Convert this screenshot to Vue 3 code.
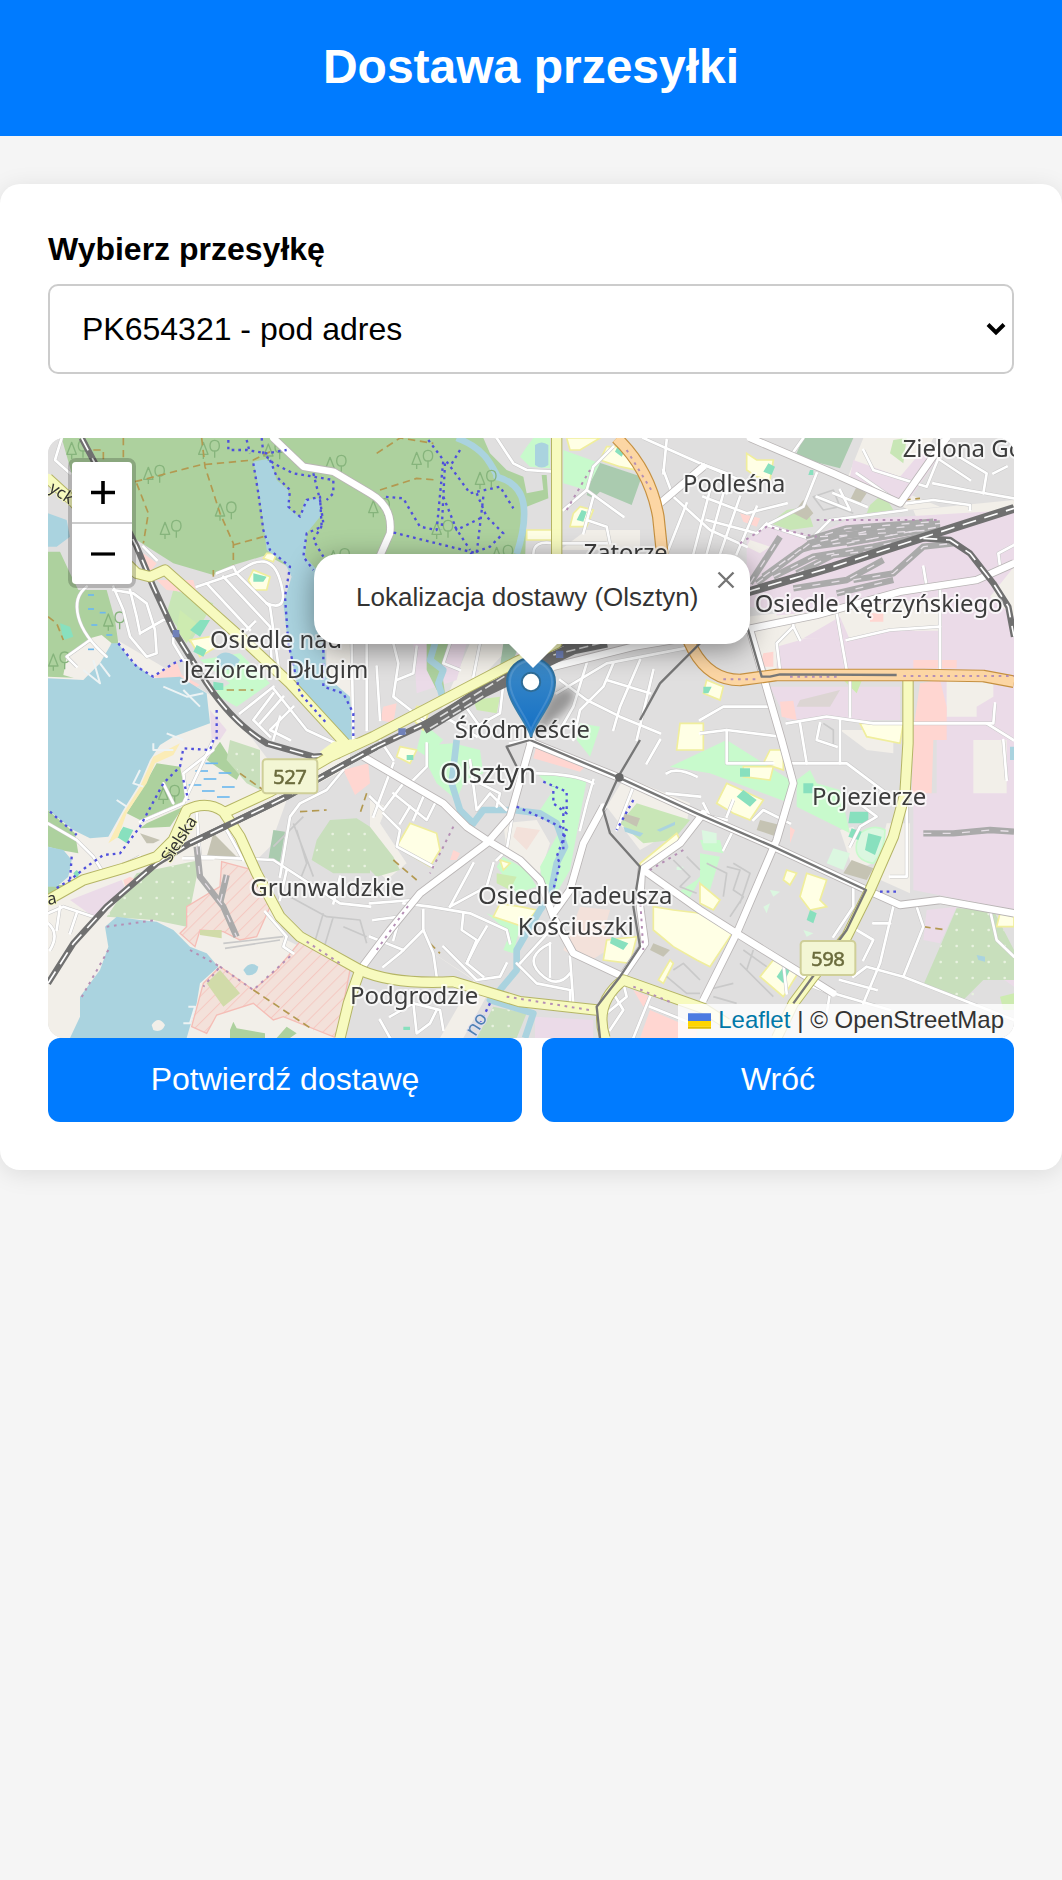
<script setup>
import { ref } from 'vue'

const parcel = ref('PK654321')

// Map geometry: three units per screen pixel.
const areas = [
  // open land
  { c: '#f2efe9', d: 'M24 690L180 600L420 740L520 800L640 930L700 1010L930 940L930 1010L740 1110L690 1250L640 1300L740 1530L920 1620L900 1824H24Z' },
  { c: '#f2efe9', d: 'M860 640H935V830L860 760ZM990 1110L1040 1130L1020 1180L1100 1300L1040 1350L990 1300Z' },
  { c: '#f2efe9', d: 'M1390 1180L1490 1170L1530 1240L1500 1330L1400 1260ZM1150 1550L1300 1650L1200 1824H1270L1350 1680Z' },
  { c: '#f2efe9', d: 'M2470 24H2680L2600 190L2700 230L2600 240L2540 180L2420 150ZM2120 560L2400 530L2700 540V720H2180ZM2620 240L2922 210V250L2640 290ZM2800 500L2922 400V540L2870 500Z' },
  { c: '#f2efe9', d: 'M2700 750H2860V860H2700ZM2800 900H2900V1090H2800ZM2400 900H2560V970L2480 960ZM2540 1180H2610V1390L2500 1340ZM2400 1200L2440 1190L2500 1300L2440 1320Z' },
  { c: '#f2efe9', d: 'M1755 1040L1950 1120L1940 1180L1800 1260L1700 1130ZM1560 360H1800V300L1640 300ZM1420 640H1290L1200 850L1270 800Z' },
  // industrial
  { c: '#ebdbe8', d: 'M2120 330L2180 280L2320 320L2420 270L2922 240V540H2700V720H2700V590L2400 630L2300 625L2210 630V540L2120 530Z' },
  { c: '#f2efe9', d: 'M2120 565L2330 545L2700 500V595L2560 600L2430 630L2400 560L2290 625L2230 640L2200 700L2150 600Z' },
  { c: '#ebdbe8', d: 'M2700 490H2922V1440L2620 1380L2620 1090H2690V860L2700 720ZM2210 650L2300 625H2430L2560 602H2700V720H2210ZM2190 770H2580V870L2240 870Z' },
  { c: '#ebdbe8', d: 'M2440 90L2580 140L2640 70L2690 90L2600 220L2430 140ZM1120 640H1280L1250 750L1130 790ZM1440 650H1560L1500 780L1400 750Z' },
  { c: '#ebdbe8', d: 'M90 1410L245 1350L260 1385L160 1460ZM510 840L560 900L540 930H515ZM1485 1760L1660 1770V1824H1485ZM2660 1440L2750 1430L2700 1540L2650 1530ZM2900 1600H2922V1670L2880 1640Z' },
  { c: '#f2efe9', d: 'M2720 750H2860V800L2810 830V860H2720ZM2800 930H2900V1090H2800ZM2130 330L2190 350L2160 370L2120 350ZM2850 500L2922 410V560Z' },
  // forest
  { c: '#add19e', d: 'M65 24H1330L1350 70L1400 120L1450 140L1460 190L1510 180L1505 135H1520L1525 205L1460 230L1455 400H1400L1000 560L800 480L745 410L680 375L580 405L520 435L400 400L290 330L95 130Z' },
  { c: '#add19e', d: 'M24 365H60L90 430L115 480H200L225 570L235 640L190 650L140 745L24 740Z' },
  { c: '#f2efe9', d: 'M80 680L150 625L185 615L215 640L180 700L130 752L70 735Z' },
  { c: '#add19e', d: 'M350 1000L420 1010L440 1110L300 1170L260 1150L310 1070ZM500 990L540 935L600 1030L590 1050ZM24 1140L105 1210L115 1270L60 1260L24 1250ZM320 1180L430 1130L390 1190L300 1195ZM24 1365H90L60 1395H24Z' },
  { c: '#add19e', d: 'M1160 640H1225L1205 720L1215 790L1190 780L1160 720ZM570 1800L580 1775L590 1795L675 1810V1824H570ZM710 1824L740 1790L770 1810L750 1824Z' },
  { c: '#aacbaf', d: 'M1670 95L1805 140L1775 225L1680 185L1660 205L1640 195ZM2290 24H2440L2400 115L2265 80ZM1390 640H1440L1420 690L1380 710ZM700 1200L735 1205L720 1295L685 1290Z' },
  // orchard, scrub and grass
  { c: '#c8dfbc', d: 'M290 1330L480 1290L440 1490L340 1470L200 1460ZM570 930L660 960V1080L620 1060L560 990ZM870 1170L950 1165L990 1190V1330H880L815 1290L830 1230ZM990 1190L1060 1280L1080 1320L1010 1340L990 1320Z' },
  { c: '#c8dfbc', d: 'M2750 1435L2860 1440L2922 1560V1650L2830 1650L2770 1710L2650 1665ZM1360 1730L1460 1750L1430 1824H1310Z' },
  { c: '#c8e6b6', d: 'M2240 240L2300 230L2320 290L2250 300L2190 280ZM2490 225L2530 190L2560 240L2480 250ZM2560 30L2600 24L2590 100L2550 70ZM400 480L520 520L450 640L380 550ZM1740 1180L1790 1120L1950 1170L1900 1230L1810 1240Z' },
  { c: '#c8facc', d: 'M480 690L600 670L690 760L590 830L520 790L570 760ZM1460 50L1480 24H1530V115L1470 110L1440 80ZM1570 60L1680 100L1640 180L1570 160Z' },
  { c: '#c8facc', d: 'M1170 945L1240 940L1320 960L1330 1030L1270 1060L1250 1110L1190 1060L1160 1000ZM1490 1030L1640 1050L1590 1320L1520 1440L1500 1310L1560 1200L1500 1140L1540 1080Z' },
  { c: '#c8facc', d: 'M1390 1280L1460 1320L1490 1370L1430 1390L1370 1310ZM1340 1450L1440 1490L1420 1570L1390 1560L1410 1510ZM1890 1010L2060 930L2250 1050V1120L2010 1030ZM2270 1050L2310 1020L2330 1060L2400 1080L2430 1210L2270 1130ZM1980 1230L2040 1230L2050 1270L1990 1260ZM1980 1270L2040 1280L2010 1380L1980 1360Z' },
  { c: '#c8facc', d: 'M1620 880L1680 890L1650 980L1610 930ZM1150 880L1210 930L1160 980L1130 960ZM1990 1330L1940 1420L1910 1390L1970 1350Z' },
  { c: '#cdebb0', d: 'M1300 810L1380 800L1370 850L1310 840ZM420 540L470 580L440 640L410 600ZM500 1660L540 1620L600 1690L550 1730ZM1370 1330L1430 1340L1410 1380L1370 1360ZM2410 750L2470 740L2450 790ZM2880 1700L2922 1690V1740L2890 1740Z' },
  // retail and brownfield
  { c: '#ffd6d1', d: 'M1490 945L1640 1005L1620 1025L1480 985ZM2640 760L2700 750L2720 830V930H2620V900ZM2620 930H2680L2675 1090H2615ZM2220 815L2260 812L2270 870L2225 860ZM2170 670L2200 665L2200 710H2160ZM2490 550H2530V575H2490Z' },
  { c: '#ffd6d1', d: 'M340 740L410 695L425 735L480 765L460 775L380 750ZM310 370L350 400L330 425L310 410ZM350 450L460 450L470 490L380 480ZM910 1020L985 1000L990 1060L945 1095ZM1030 830L1070 820L1060 880L1020 870Z' },
  { c: '#ffd6d1', d: 'M1780 1680L1830 1700L1810 1730ZM1830 1740L1970 1800V1824H1800ZM2100 250L2160 265L2150 290L2110 275ZM2620 690H2750V715H2620ZM2250 1190L2265 1200L2250 1240ZM250 1350L270 1340L290 1350L260 1385ZM1240 1260L1260 1270L1250 1290L1230 1290Z' },
  { c: '#f3e1da', d: 'M1430 1190L1500 1200L1460 1260L1420 1220ZM1620 1430L1710 1440L1690 1510L1750 1530L1640 1600L1570 1560Z' },
  { c: '#c5c3b3', d: 'M2290 210L2320 250L2300 270L2260 250ZM520 1210L590 1280L500 1280ZM300 1210L360 1230L340 1240L320 1240ZM1750 1150L1800 1165L1790 1190L1750 1170ZM2160 1170L2220 1185L2210 1220L2150 1200ZM2435 1290L2500 1315L2480 1350L2410 1330ZM2450 170L2480 190L2460 220L2430 210ZM1840 1540L1890 1560L1870 1580L1830 1560Z' },
  { c: '#dcd5d3', d: 'M2280 810L2400 780L2370 830H2270Z' },
  // schools
  { c: '#ffffe5', s: '#f0ee9c', d: 'M1680 24H1580L1590 60L1620 60ZM1700 50L1760 50L1790 120L1740 110L1680 90ZM1620 230L1660 240L1640 290L1590 290L1600 250ZM640 420L690 440L680 480L640 480L625 450ZM680 370L710 370L700 395L670 385Z' },
  { c: '#ffffe5', s: '#f0ee9c', d: 'M1110 1180L1190 1210L1200 1260L1170 1310L1070 1250ZM1380 1420L1440 1430L1490 1440L1450 1490L1360 1460ZM1460 300H1540V330H1460ZM450 630L510 620L530 650L480 680Z' },
  { c: '#ffffe5', s: '#f0ee9c', d: 'M1840 1430L1900 1440L2000 1452L2080 1505L2010 1610L1970 1590L1900 1550L1840 1500Z' },
  { c: '#ffffe5', s: '#f0ee9c', d: 'M2120 70L2150 90L2200 90L2190 150L2150 140L2120 120ZM2000 750L2050 770L2040 810L1990 790ZM2060 1060L2170 1110L2130 1170L2080 1150L2030 1120ZM2190 960L2230 960V1020L2170 1000ZM2110 1010L2200 1010L2190 1050L2110 1040ZM2460 880L2590 880L2580 940L2480 920Z' },
  { c: '#ffffe5', s: '#f0ee9c', d: 'M2300 1330L2360 1350L2340 1410L2360 1430L2310 1440L2280 1400ZM2240 1320L2270 1330L2250 1365L2230 1350ZM2200 1590L2280 1620L2230 1700L2160 1640ZM1980 1360L2040 1410L2020 1440L1980 1420ZM2880 1450L2922 1460V1490H2870ZM1700 1530L1790 1520L1770 1600L1690 1590ZM1800 1300L1910 1210L1920 1230L1800 1330ZM1080 950L1130 960L1110 1000L1070 980ZM1130 830L1170 830L1150 900L1120 870ZM1920 880H1990V960H1910ZM1890 1590L1900 1600L1870 1660L1855 1650ZM1380 1290L1410 1300L1390 1320Z' },
  // pitches
  { c: '#88e0be', d: 'M480 570L510 570L480 620L450 600ZM470 645L500 660L490 680L460 665ZM520 755L550 760V780H520ZM640 430L680 440L670 455H640ZM60 580L90 590L100 620L70 630ZM1735 45L1755 60L1745 80L1725 65ZM1625 240L1640 245L1630 275L1610 270ZM2185 100L2205 110L2195 135L2170 125ZM1990 770L2015 770L2005 790H1990Z' },
  { c: '#dbf7e0', s: '#c8facc', d: 'M2460 1210Q2500 1180 2535 1200Q2535 1260 2500 1300Q2440 1290 2450 1240Z' },
  { c: '#88e0be', d: 'M2430 1145H2485V1180H2425ZM2435 1195L2465 1205L2455 1230L2425 1220ZM2485 1210L2525 1220L2505 1275L2475 1260ZM1715 1520L1765 1540L1750 1560L1710 1540ZM2110 1080L2150 1110L2130 1130L2090 1100ZM2230 1610L2250 1620L2230 1660L2210 1640ZM2310 1440L2330 1450L2320 1480L2300 1470ZM250 1190L280 1200L260 1240L230 1220ZM110 1320L120 1330L110 1345L100 1330ZM2290 1060H2320V1090H2290ZM2100 1015H2130V1040H2100ZM2310 120H2320V135H2305ZM1100 975H1120V990H1100ZM1090 1790H1110V1800H1090Z' },
  { c: '#dbf7e0', d: 'M2380 1255L2430 1270L2410 1320L2360 1300ZM1985 1200L2030 1210V1240H1990ZM2190 1380L2220 1385L2200 1400ZM2170 1430L2190 1420L2180 1450ZM2290 1500L2320 1510L2300 1520ZM1910 1310H1930V1320H1910Z' },
  // water
  { c: '#aad3df', d: 'M640 95L690 85L710 150L745 180L750 240L780 260L795 210L840 205L840 260L800 310L795 380L840 430L860 740L930 800L940 930L880 920L780 800L745 650L730 520L755 440L735 400L680 360L665 240L650 140Z' },
  { c: '#aad3df', d: 'M24 745L130 750L180 700L215 640L235 640L270 690L340 745L420 740L500 790L510 880L400 920L360 945L330 990L300 1060L250 1140L205 1220L150 1225L100 1200L24 1140ZM24 250L80 270L90 320L50 350H24ZM24 1250L70 1260L95 1290L85 1340L50 1370H24Z' },
  { c: '#aad3df', d: 'M195 1490L230 1460L300 1470L350 1475L400 1500L450 1550L500 1570L535 1610L480 1660L470 1720L440 1824H90L120 1760V1700L180 1620L205 1550ZM610 1620Q630 1590 655 1610Q650 1640 620 1635ZM530 680Q560 650 600 690Q580 730 540 715Z' },
  { c: '#aad3df', d: 'M1485 45Q1505 30 1525 45V105Q1505 120 1485 105ZM1750 1190L1810 1210L1800 1220L1755 1205ZM1850 1200L1905 1175V1185L1860 1205ZM2810 1575L2835 1580V1595L2815 1590ZM2910 950H2922V990H2910Z' },
  { c: '#f2efe9', d: 'M335 1785Q355 1755 375 1785Q365 1810 340 1800Z' },
  // beach along the big lake
  { c: '#fbecb6', d: 'M340 980L420 940L400 975L345 1000L320 1060L260 1150L235 1220L205 1240L250 1150L300 1070Z' },
]

// Brownfield plots drawn with a hatch
const hatched = [
  'M545 1295L640 1320L690 1430L650 1520L600 1530L550 1505L480 1500L465 1550L420 1510L440 1490V1430L540 1370Z',
  'M780 1535L930 1620L890 1824L730 1760L700 1770L640 1720L530 1755L500 1810L455 1790L490 1660L540 1610L640 1680L710 1620Z',
]

const streams = [
  'M1250 24Q1320 50 1350 100T1370 140Q1440 160 1450 220T1430 372',
  'M1185 640L1170 690L1210 720L1195 760L1210 810',
  'M1250 930L1235 1060L1260 1140L1300 1180L1330 1140L1420 1140L1500 1150L1550 1180L1575 1250L1550 1300L1530 1400L1500 1440L1430 1560V1620L1380 1680L1350 1710L1480 1750L1455 1824',
]

const minor = [
  // north-west
  'M65 24L45 90L90 130', 'M140 470Q100 500 115 560T200 680', 'M150 630L80 680L110 710', 'M220 470L250 540L270 620L320 680L350 670L345 600L320 520L280 490L220 480', 'M270 480L290 560L300 610', 'M300 610L370 570Q400 560 400 640L430 690L470 700', 'M470 470L590 430L580 410L530 430', 'M590 430Q690 350 720 450T680 520', 'M590 430L690 530L720 740', 'M550 440L690 590L695 700', 'M500 460L630 600', 'M620 600L645 575',
  'M350 390L310 350', 'M700 770L600 850', 'M700 775L800 900L930 960', 'M700 790L640 870L690 920', 'M730 800L660 880', 'M760 830L690 900L750 930', 'M935 640L940 930', 'M980 640V900', 'M720 860L700 930',
  // old town and centre
  'M1060 640L1075 700L1060 800L1150 870', 'M1130 650L1120 730L1070 750', 'M1010 710L1020 870', 'M1230 640L1210 700L1260 720', 'M1320 640L1300 740', 'M1150 880L1230 870L1310 920', 'M1270 820L1320 890', 'M1390 760L1380 850L1290 900', 'M1410 940L1460 930', 'M1560 750L1640 810L1740 860L1860 910', 'M1640 700L1600 830L1560 900', 'M1720 700L1690 770L1620 840L1600 930', 'M1800 690L1740 830L1720 900', 'M1700 750L1830 790', 'M1550 790L1700 700L1960 650', 'M1840 720L1790 930',
  'M990 1100L1030 1140L1090 1060', 'M1000 1160L1060 1000', 'M1030 1150L1080 1200L1070 1250L1180 1310', 'M1060 1090L1160 1170L1190 1110', 'M1080 1180L1110 1130', 'M1120 1170L1150 1100', 'M1160 940V1010L1120 1050', 'M1020 930L1060 990', 'M1290 990L1310 1140L1350 1090L1400 1140', 'M1320 1060L1380 1090L1370 1130', 'M1490 1030Q1600 1030 1660 1060', 'M1420 1140L1400 1260L1370 1290', 'M1360 1300L1340 1370L1230 1430', 'M1300 1300L1230 1430', 'M1090 1420L1170 1430L1290 1450L1400 1500L1410 1540', 'M1270 1450L1265 1500L1310 1530L1280 1600', 'M1150 1440L1150 1500L1180 1570L1190 1640', 'M1150 1500L1080 1570L1030 1610', 'M990 1520L1090 1560', 'M1340 1490L1310 1540L1280 1600L1330 1640', 'M1210 1550L1280 1620L1310 1650L1380 1640L1400 1600', 'M990 1420L1120 1410', 'M1000 1470L1080 1460L1060 1530',
  'M1530 1540V1640', 'M1530 1540Q1450 1580 1500 1630T1590 1630', 'M1430 1600L1490 1660L1590 1680L1590 1720', 'M1590 1580L1600 1720', 'M1550 1480L1440 1600', 'M1620 1200L1640 1120L1660 1050', 'M1780 1070L1730 1200', 'M1820 1000L1860 930', 'M1880 1030Q1910 1010 1970 1040', 'M1880 1090L1980 1100', 'M1700 1750L1760 1700L1750 1660', 'M1830 1700L1780 1824', 'M1830 1730L1980 1790', 'M1720 1690L1750 1740L1710 1800',
  // north
  'M1370 24L1420 100L1460 120L1540 125', 'M1570 240L1640 180L1660 110L1720 50', 'M1640 180L1750 260', 'M1660 200L1630 310', 'M1640 270L1700 290L1710 340', 'M1480 372Q1480 330 1540 340H1700', 'M1870 120L1900 200L2010 300L2120 350', 'M1880 30L1870 130', 'M1810 24L1980 100L2100 150', 'M1990 200L2120 250L2240 220', 'M2000 270L2150 310L2180 280', 'M2010 180L1960 372', 'M2050 190L2000 372', 'M2100 200L2040 372', 'M2150 230L2090 372', 'M1940 220L1880 372', 'M2330 130L2290 230L2180 285L2320 330', 'M2250 80L2290 24', 'M2450 130L2580 220', 'M2470 60L2500 120L2660 170L2720 24', 'M2680 160L2780 180L2922 205', 'M2700 90L2790 150', 'M2740 70L2840 130L2830 190', 'M2860 130L2900 110', 'M1980 100L2060 130V190', 'M2320 320L2370 270L2600 240', 'M2600 220L2680 210L2790 225V240', 'M2330 200L2430 240L2400 180', 'M2380 190L2480 230',
  // east
  'M2220 720L2210 640L2260 590L2280 630', 'M2260 590L2260 560', 'M2390 550L2420 720', 'M2420 630L2550 600L2700 590', 'M2700 480V720', 'M2650 410L2660 470', 'M2880 410L2875 370L2922 345', 'M2430 750V860', 'M2240 880L2360 860L2500 880H2860L2865 820', 'M2840 880L2920 930', 'M2280 880L2300 1000', 'M2400 870V1000', 'M2340 880L2330 930L2390 950', 'M2890 930L2900 1050', 'M1980 870L2050 830H2190', 'M1980 910L2060 900L2220 920', 'M2060 900V1000L2200 1000', 'M2250 1000H2420L2540 1090', 'M2430 1250L2460 1190L2510 1160L2470 1130', 'M2600 1090V1340H2550', 'M2140 1170L2170 1140L2250 1180', 'M2060 1160L2080 1110', 'M2050 1260L2080 1200', 'M2440 1370L2440 1430L2380 1520', 'M2560 1430L2520 1600L2470 1720', 'M2630 1430L2650 1490L2590 1640L2480 1610L2440 1640', 'M2590 1640L2922 1770', 'M2450 1500L2500 1530L2470 1590', 'M2500 1480H2550', 'M2850 1440L2870 1530L2922 1580', 'M2320 1670L2370 1690L2360 1750', 'M2400 1650L2510 1680', 'M2380 1690L2550 1740', 'M2240 1690L2230 1600', 'M1990 1120L2010 1160L2060 1170',
  // west
  'M24 1180L110 1230L160 1280L185 1320', 'M300 1175L430 1120L520 930', 'M370 1060L400 1120', 'M440 1110L430 1030L520 960', 'M470 1150L480 1280L700 1290L900 1420L990 1430', 'M430 1285H520', 'M560 1200L610 1290', 'M740 1320L720 1410', 'M910 1020L860 1080L780 1120L750 1160L720 1340', 'M675 1445L740 1520L730 1550L760 1570', 'M24 1450L70 1430L160 1460', 'M110 1450L90 1510', 'M24 1480Q60 1510 30 1560', 'M60 1430L50 1500', 'M260 1300L300 1280', 'M1020 1770L1050 1824', 'M1050 1760L1120 1720L1200 1740L1210 1800', 'M1120 1720L1130 1810L1170 1780L1190 1740', 'M970 1600L990 1570', 'M900 1340L880 1420',
]

const service = [
  'M790 1160L700 1250M770 1200L800 1300L780 1350M760 1180L820 1340M750 1400L860 1460L960 1470L980 1540M850 1450L820 1550M880 1460L850 1560M910 1490L980 1520',
  'M2060 1310L2100 1320L2080 1380L2110 1400L2070 1460M2080 1300L2130 1330L2100 1420M2000 1300L2060 1330L2050 1400',
  'M2320 200L2380 180L2400 230L2350 240ZM2340 210L2440 250',
  'M2000 1680L2080 1660M2020 1700L2090 1720M2110 1560L2180 1610M2100 1600L2200 1700M2140 1560L2120 1620',
  'M1880 1640L1940 1690H1980M1900 1620L1930 1600L1980 1650M1900 1290L1950 1340L1920 1370L1970 1390M1940 1280L1980 1320',
  'M550 1540L730 1520M555 1555L720 1530M2350 880L2380 900V950',
]

const main = [
  'M700 24L790 110L880 125L990 190Q1060 230 1050 310L1010 400',
  'M970 980L1210 1120L1280 1190L1340 1230L1440 1290L1500 1350L1540 1460L1600 1570L1750 1640',
  'M1475 930L1410 1160L1340 1240L1140 1390L1050 1500L960 1620',
  'M1690 1130L1630 1240L1590 1380L1540 1450',
  'M1990 1150L1920 1240L1805 1320L1800 1430L1815 1540L1750 1635',
  'M1810 1320L1980 1440L2090 1510L2300 1640L2380 1690',
  'M2130 600L2170 740L2225 930L2260 1060L2210 1230L2090 1510L1990 1710',
  'M1470 935L1730 1040L1970 1150L2200 1250L2480 1380L2580 1425L2700 1410L2922 1450',
  'M2130 24L2380 130L2580 220L2700 50L2720 24',
  'M2110 600L2330 555L2580 485L2810 450L2922 400',
  'M1540 710L1780 650L1960 620',
  'M1860 220L1990 110',
]

const secondary = [
  'M24 145L100 215L250 390L290 430L330 440L375 420L600 620L750 760L920 945',
  'M560 1145L690 1085L870 980L1000 920L1430 695L1550 640V24',
  'M24 1410L130 1350L250 1315L350 1280L400 1230L440 1140Q500 1110 550 1145L600 1220L650 1330L720 1460L780 1520L960 1620Q1060 1665 1240 1655L1440 1715L1670 1740',
  'M960 1620L925 1720L900 1824',
  'M1695 1824Q1660 1720 1750 1650L1990 1735L2060 1780',
  'M2604 750V940L2595 1090L2560 1220L2490 1380L2420 1520L2320 1640L2260 1720L2210 1824',
]

const primary = ['M1730 24Q1830 120 1855 260L1880 500L1960 660Q2010 750 2100 750L2210 735H2650L2830 738L2922 755']

const tram = [
  'M1800 870L1860 760L1990 630', 'M2110 550L2165 740L2190 740L2220 733L2570 735', 'M1470 930L1730 1040L1970 1150L2200 1250L2478 1380L2420 1500L2260 1720',
  'M1800 930L1735 1040L1690 1140L1710 1210L1800 1310L1780 1430L1800 1550L1740 1640L1670 1730L1680 1824', 'M1470 930L1400 950L1430 1010',
]

const yard = [
  'M2130 460L2220 320', 'M2150 460L2310 340L2500 300L2700 280', 'M2200 440L2320 380L2500 350L2640 320', 'M2300 330L2420 295L2680 275', 'M2320 350L2500 325L2700 290', 'M2340 320L2480 312L2680 300', 'M2260 475L2420 450L2530 390', 'M2440 450L2560 430L2650 350L2740 340', 'M2420 340L2640 300', 'M2390 490L2560 450', 'M2270 430L2380 375L2470 365', 'M2170 440L2280 360L2420 320', 'M2650 1210H2740L2850 1200L2922 1205', 'M470 1250L480 1340L550 1430L590 1520', 'M560 1335L540 1420',
]

const rail = [
  'M24 1660L100 1540L200 1430L350 1300L450 1240L740 1100L900 1010L1010 950L1200 860L1300 790L1420 710L1600 640L1800 590L2140 480L2380 410L2640 325L2922 235',
  'M125 24L165 100L290 350L340 470L400 600L500 760Q580 880 680 940L820 980L900 975',
  'M2650 325L2730 330L2790 370L2860 460L2905 530L2922 620',
]

const footpaths = [
  'M640 100L655 190L670 300L690 360L750 410L735 500L745 640', 'M690 90L710 140L750 180L745 230L780 260L800 210L840 200L845 290L800 310L790 380L820 420', 'M565 30V60H620L680 70L740 60', 'M620 30L630 70', 'M665 24L670 70L700 100L760 130L880 150V190L860 210', 'M820 130L840 210', 'M840 210L850 280L820 330L850 380',
  'M1165 30L1210 90L1190 300L1140 290L1110 240L1090 205L1030 200', 'M1220 95L1290 190L1380 170L1420 235', 'M1215 100L1205 300', 'M1310 190L1340 260L1390 310L1350 350L1290 372', 'M1330 200L1310 370L1050 305', 'M1260 60L1230 110', 'M1210 200L1250 300L1330 260', 'M1245 290L1290 360', 'M235 640L290 710L340 740L400 700L430 690', 'M850 640V770L910 790L940 850V930', 'M745 640L780 790L860 880',
  'M520 930L510 960L430 955L420 1010L370 1060L300 1190L240 1270L190 1275L140 1310L90 1350L40 1380', 'M30 1145L110 1215', 'M95 1280L90 1350', 'M430 1050L445 1110', 'M1510 1055L1580 1085V1150L1540 1120V1070', 'M1430 1130L1520 1170L1580 1200L1550 1280L1560 1300L1540 1380', 'M1570 1130V1260', 'M1780 1110L1730 1200', 'M1350 1720L1320 1780', 'M2520 1385H2580', 'M530 840V930',
]

const tracks = [
  'M285 155L480 105L640 90L700 60', 'M485 24L495 110L540 250L580 340V410', 'M250 24V150', 'M580 345L670 320', 'M290 160L325 250L310 340', 'M520 440V420', 'M1010 70L1080 24L1180 40', 'M1020 180L1130 145L1190 150', 'M160 60H190V120', 'M24 560L50 580L70 630', 'M600 1030L670 1080', 'M780 1145L860 1140', 'M980 1090L960 1150', 'M640 1680L820 1800', 'M560 780H640', 'M1060 1290L1130 1350', 'M2590 210L2640 205', 'M2650 1490L2720 1500', 'M1170 1540L1200 1570',
]

const trees = [[95, 55], [490, 55], [325, 130], [540, 240], [375, 295], [685, 60], [870, 100], [205, 570], [40, 690], [1130, 85], [1320, 145], [1190, 295], [1370, 370], [1000, 230], [880, 380], [370, 1090]]

const wetland = [
  [150, 495], [150, 537], [185, 548], [160, 585], [205, 615], [150, 658], [480, 1023], [550, 1029], [505, 1047], [460, 1065], [560, 1071], [500, 1083], [545, 1101], [510, 1000],
]

const labels = [
  { t: 'Osiedle nad', x: 510, y: 653, w: 396 },
  { t: 'Jeziorem Długim', x: 431, y: 743, w: 554 },
  { t: 'Zatorze', x: 1631, y: 394, w: 252 },
  { t: 'Podleśna', x: 1929, y: 186, w: 307 },
  { t: 'Zielona Góra', x: 2588, y: 82, w: 430 },
  { t: 'Osiedle Kętrzyńskiego', x: 2144, y: 545, w: 744 },
  { t: 'Śródmieście', x: 1244, y: 923, w: 406 },
  { t: 'Olsztyn', x: 1200, y: 1060, w: 288, s: 80 },
  { t: 'Grunwaldzkie', x: 631, y: 1397, w: 463 },
  { t: 'Osiedle Tadeusza', x: 1314, y: 1421, w: 583 },
  { t: 'Kościuszki', x: 1433, y: 1516, w: 348 },
  { t: 'Podgrodzie', x: 930, y: 1721, w: 385 },
  { t: 'Pojezierze', x: 2316, y: 1125, w: 343 },
]

const shields = [
  { t: '527', x: 668, y: 988 },
  { t: '598', x: 2282, y: 1533 },
]
</script>

<template>
  <div class="page">
    <header class="header"><h1>Dostawa przesyłki</h1></header>

    <main class="card">
      <label class="label" for="parcel">Wybierz przesyłkę</label>
      <div class="select-wrap">
        <select id="parcel" v-model="parcel" class="select">
          <option value="PK654321">PK654321 - pod adres</option>
        </select>
        <svg class="chevron" viewBox="0 0 20 14"><path d="M2 2.5L10 10.5L18 2.5" fill="none" stroke="#000" stroke-width="4" /></svg>
      </div>

      <section class="map">
        <svg class="tiles" viewBox="24 24 2898 1800" preserveAspectRatio="none">
          <defs>
            <pattern id="hatch" width="28" height="28" patternUnits="userSpaceOnUse" patternTransform="rotate(45)">
              <rect width="28" height="28" fill="#f3e1da" />
              <rect width="3" height="28" fill="#f5c9c2" />
            </pattern>
            <pattern id="dots" width="48" height="48" patternUnits="userSpaceOnUse">
              <circle cx="14" cy="12" r="4" fill="#e8f2df" />
            </pattern>
          </defs>
          <rect x="24" y="24" width="2898" height="1800" fill="#e0dfdf" />
          <path v-for="(a, i) in areas" :key="'a' + i" :d="a.d" :fill="a.c" :stroke="a.s || 'none'" stroke-width="5" />
          <path v-for="(h, i) in hatched" :key="'h' + i" :d="h" fill="url(#hatch)" stroke="#f5bdb6" stroke-width="4" />
          <path d="M500 1660L540 1620L600 1690L550 1730ZM480 1500H545V1525L480 1515Z" fill="#d1dba9" />
          <path d="M290 1330L480 1290L440 1490L200 1460ZM870 1170L990 1190V1330H880L815 1290ZM2750 1435L2860 1440L2922 1560V1650L2770 1710L2650 1665ZM570 930L660 960V1080L560 990ZM1360 1730L1460 1750L1430 1824H1310Z" fill="url(#dots)" />
          <g class="stream"><path v-for="(d, i) in streams" :key="i" :d="d" /></g>
          <g class="shore">
            <path d="M160 690L180 760L130 720M180 700L210 740M370 770L440 800L490 790M430 780L480 830M380 910L430 930M300 1020L280 1060L310 1070M340 940V960H400M230 1110L260 1130M445 1730H465L450 1780H430" />
          </g>

          <g class="tree">
            <path v-for="(t, i) in trees" :key="i" :transform="`translate(${t[0]} ${t[1]})`" d="M0 -18L-14 18H14ZM0 18V32M34 -24Q48 -24 48 -8T34 8Q20 8 20 -8T34 -24M34 8V28" />
          </g>
          <g class="wet"><path v-for="(w, i) in wetland" :key="i" :d="i < 6 ? `M${w[0] - 6} ${w[1]}h18` : `M${w[0] - 14} ${w[1]}h38`" /></g>
          <g class="track"><path v-for="(d, i) in tracks" :key="i" :d="d" /></g>

          <g class="service"><path v-for="(d, i) in service" :key="i" :d="d" /></g>
          <g class="minor-edge"><path v-for="(d, i) in minor" :key="i" :d="d" /></g>
          <g class="minor"><path v-for="(d, i) in minor" :key="i" :d="d" /></g>
          <g class="yard"><path v-for="(d, i) in yard" :key="i" :d="d" /></g>
          <g class="yard-gap"><path v-for="(d, i) in yard" :key="i" :d="d" /></g>
          <g class="main-edge"><path v-for="(d, i) in main" :key="i" :d="d" /></g>
          <g class="main"><path v-for="(d, i) in main" :key="i" :d="d" /></g>
          <g class="rail"><path v-for="(d, i) in rail" :key="i" :d="d" /></g>
          <path d="M2120 487L2380 410L2640 325L2922 235" fill="none" stroke="#707070" stroke-width="26" />
          <g class="rail-gap"><path v-for="(d, i) in rail" :key="i" :d="d" /></g>
          <path d="M1150 895L1330 785L1600 655L1700 635" fill="none" stroke="#707070" stroke-width="36" />
          <path d="M1170 895L1330 798M1200 860L1400 735M1540 675L1700 635" fill="none" stroke="#ddd" stroke-width="5" stroke-dasharray="28 12" />
          <g class="sec-edge"><path v-for="(d, i) in secondary" :key="i" :d="d" /></g>
          <g class="sec"><path v-for="(d, i) in secondary" :key="i" :d="d" /></g>
          <path d="M840 965L880 935L1000 920L960 945L860 985Z" fill="#f7fabf" />
          <path d="M450 1240L740 1100L900 1010L1010 950" fill="none" stroke="#707070" stroke-width="19" />
          <path d="M450 1240L740 1100L900 1010L1010 950" fill="none" stroke="#fff" stroke-width="5" stroke-dasharray="42 26" />
          <g class="pri-edge"><path v-for="(d, i) in primary" :key="i" :d="d" /></g>
          <g class="pri"><path v-for="(d, i) in primary" :key="i" :d="d" /></g>
          <g class="steps">
            <path d="M1760 60L1840 190M2050 748H2150M2250 740H2400M2590 738H2922M1400 1700L1660 1742M1780 1670L1900 1720M800 1535L900 1600M1240 1190L1170 1330M1010 1560L1110 1420M1930 1260L1830 1320M1800 1400L1810 1560M2330 270H2700M200 1490L350 1470M450 1560L540 1610L490 1670M540 1610L640 1680L760 1570M205 1560L120 1710M2100 340L2180 290L2330 320M1580 240L1650 120" />
          </g>
          <g class="tram"><path v-for="(d, i) in tram" :key="i" :d="d" /></g>
          <g class="foot"><path v-for="(d, i) in footpaths" :key="i" :d="d" /></g>
          <path d="M398 600h20v22h-20zM1548 662h22v22h-22zM1075 895h22v20h-22z" fill="#7081b9" />
          <circle cx="1738" cy="1042" r="13" fill="#666" />

          <g class="label-map">
            <text v-for="l in labels" :key="l.t" :x="l.x" :y="l.y" :font-size="l.s || 70" :textLength="l.w" lengthAdjust="spacingAndGlyphs">{{ l.t }}</text>
          </g>
          <text class="street" transform="translate(390 1300) rotate(-57)" font-size="50" textLength="152">Sielska</text>
          <text class="street" transform="translate(24 182) rotate(33)" font-size="50">yck</text>
          <text class="street" x="25" y="1425" font-size="50" transform="rotate(-12 25 1425)">a</text>
          <text class="river" transform="translate(1306 1822) rotate(-58)" font-size="58">no</text>

          <g v-for="s in shields" :key="s.t">
            <rect :x="s.x" :y="s.y" width="164" height="102" rx="10" fill="#f3f6d4" stroke="#cfcf98" stroke-width="6" />
            <text class="shield" :x="s.x + 82" :y="s.y + 75" font-size="61" text-anchor="middle" textLength="102">{{ s.t }}</text>
          </g>
        </svg>

        <div class="zoom">
          <button type="button" aria-label="+"><svg viewBox="0 0 24 24"><path d="M0 12.5H24M12 1V24" stroke="#000" stroke-width="3.6" /></svg></button>
          <button type="button" aria-label="−"><svg viewBox="0 0 24 24"><path d="M0 12H24" stroke="#000" stroke-width="3.2" /></svg></button>
        </div>

        <svg class="pin" viewBox="0 0 110 84">
          <defs>
            <linearGradient id="pinFill" x1="0" y1="0" x2="0" y2="1"><stop offset="0" stop-color="#3f8bc6" /><stop offset="1" stop-color="#126fc6" /></linearGradient>
            <linearGradient id="pinEdge" x1="0" y1="0" x2="0" y2="1"><stop offset="0" stop-color="#2e6c97" /><stop offset="1" stop-color="#3883b7" /></linearGradient>
            <filter id="soft" x="-40%" y="-40%" width="180%" height="180%"><feGaussianBlur stdDeviation="4" /></filter>
          </defs>
          <path d="M26 80L42 42Q54 28 66 32Q74 42 54 58Z" fill="#000" opacity=".32" filter="url(#soft)" />
          <path d="M25 80C22 66 1 46 1 25A24 24 0 0 1 49 25C49 46 28 66 25 80Z" fill="url(#pinFill)" stroke="url(#pinEdge)" stroke-width="2" />
          <path d="M25 73C21 60 4 42 4 25A21 21 0 0 1 46 25C46 42 29 60 25 73Z" fill="none" stroke="#fff" stroke-opacity=".13" stroke-width="2" />
          <circle cx="25" cy="25" r="9.2" fill="#fff" stroke="#2e6c97" stroke-width="2" />
        </svg>

        <div class="popup">
          <span>Lokalizacja dostawy (Olsztyn)</span>
          <svg class="close" viewBox="0 0 18 18"><path d="M1.5 1.5L16.5 16.5M16.5 1.5L1.5 16.5" stroke="#757575" stroke-width="2.4" /></svg>
          <svg class="tip" viewBox="0 0 52 26"><path d="M0 0H52L26 26Z" fill="#fff" /></svg>
        </div>

        <div class="attribution">
          <svg class="flag" viewBox="0 0 24 16"><path fill="#4c7be1" d="M0 0h24v8H0z" /><path fill="#ffd500" d="M0 8h24v6H0z" /><path fill="#e0bc00" d="M0 14h24v2H0z" /></svg>
          <a>Leaflet</a><span>| © OpenStreetMap</span>
        </div>
      </section>

      <div class="actions">
        <button type="button">Potwierdź dostawę</button>
        <button type="button">Wróć</button>
      </div>
    </main>
  </div>
</template>

<style>
body { background: #f5f5f5; }
</style>

<style scoped>
.page { min-height: 1880px; background: #f5f5f5; font-family: "Liberation Sans", Arial, sans-serif; }
.header { box-sizing: border-box; height: 136px; padding-bottom: 2px; display: flex; align-items: center; justify-content: center; background: #007bff; color: #fff; }
h1 { margin: 0; font-size: 48px; line-height: 56px; }
.card { box-sizing: border-box; height: 986px; margin-top: 48px; padding: 48px; background: #fff; border-radius: 20px; box-shadow: 0 4px 24px rgba(0, 0, 0, .1); }
.label { display: block; height: 52px; line-height: 34px; font-size: 32px; font-weight: bold; color: #000; }
.select-wrap { position: relative; height: 90px; margin-bottom: 64px; }
.select { appearance: none; box-sizing: border-box; width: 100%; height: 90px; padding: 0 32px; border: 2px solid #ccc; border-radius: 10px; background: #fff; color: #000; font: 32px "Liberation Sans", Arial, sans-serif; }
.chevron { position: absolute; right: 8px; top: 38px; width: 20px; height: 14px; }

.map { position: relative; height: 600px; border-radius: 16px; overflow: hidden; background: #ddd; }
.tiles { display: block; width: 100%; height: 100%; filter: blur(.45px); }
.tiles g path { fill: none; stroke-linejoin: round; }
.stream path { stroke: #aad3df; stroke-width: 20; }
.shore path { stroke: #edf3f4; stroke-width: 6; }
.tree path { stroke: #86b47c; stroke-width: 4; }
.wet path { stroke: #6db8ee; stroke-width: 5; }
.track path { stroke: #b39950; stroke-width: 5; stroke-dasharray: 22 14; }
.service path { stroke: #c9c9c9; stroke-width: 5; }
.minor-edge path { stroke: #c8c8c8; stroke-width: 11; }
.minor path { stroke: #fff; stroke-width: 8; stroke-linecap: round; }
.main-edge path { stroke: #b9b5b5; stroke-width: 25; }
.main path { stroke: #fff; stroke-width: 20; stroke-linecap: round; }
.yard path { stroke: #aaa; stroke-width: 19; }
.yard-gap path { stroke: #e6dfe6; stroke-width: 4; stroke-dasharray: 24 34; }
.rail path { stroke: #707070; stroke-width: 19; }
.rail-gap path { stroke: #fff; stroke-width: 5; stroke-dasharray: 42 26; }
.sec-edge path { stroke: #b5b565; stroke-width: 34; }
.sec path { stroke: #f7fabf; stroke-width: 28; stroke-linecap: round; }
.pri-edge path { stroke: #c59040; stroke-width: 38; }
.pri path { stroke: #fcd6a4; stroke-width: 31; }
.steps path { stroke: #b58fb5; stroke-width: 6; stroke-dasharray: 8 14; }
.tram path { stroke: #777; stroke-width: 7; }
.foot path { stroke: #4f50dc; stroke-width: 7; stroke-dasharray: 8 12; }
.tiles text { font-family: "Noto Sans", sans-serif; paint-order: stroke; stroke-linejoin: round; }
.label-map text { fill: #3c3c3c; stroke: rgba(255, 255, 255, .7); stroke-width: 12; }
.street { fill: #333; stroke: #f7fabf; stroke-width: 5; }
.river { fill: #4d80b3; stroke: #dde; stroke-width: 6; }
.tiles .shield { fill: #6a6b3c; stroke: #6a6b3c; stroke-width: 1.5; }

.zoom { position: absolute; left: 20px; top: 20px; width: 60px; border: 4px solid rgba(0, 0, 0, .2); border-radius: 8px; background-clip: padding-box; }
.zoom button { display: flex; align-items: center; justify-content: center; box-sizing: border-box; width: 60px; height: 60px; padding: 0 0 0 2px; border: 0; background: #fff; border-radius: 0 0 4px 4px; }
.zoom button:first-child { height: 62px; border-bottom: 2px solid #ccc; border-radius: 4px 4px 0 0; }
.zoom svg { width: 24px; height: 24px; }
.pin { position: absolute; left: 458px; top: 219px; width: 110px; height: 84px; }
.popup { position: absolute; left: 266px; top: 116px; width: 436px; height: 90px; box-sizing: border-box; padding-left: 42px; display: flex; align-items: center; border-radius: 24px; background: #fff; color: #333; font-size: 26px; line-height: 34px; white-space: nowrap; box-shadow: 0 6px 28px rgba(0, 0, 0, .4); }
.popup span { margin-top: -5px; }
.close { position: absolute; right: 15px; top: 17px; width: 18px; height: 18px; }
.tip { position: absolute; left: 193px; top: 88px; width: 52px; height: 26px; }
.attribution { position: absolute; right: 0; bottom: 0; display: flex; align-items: center; box-sizing: border-box; height: 34px; width: 336px; padding: 0 10px; background: rgba(255, 255, 255, .8); color: #333; font-size: 24px; line-height: 32px; white-space: nowrap; }
.flag { width: 24px; height: 16px; margin: -1px 7px 0 0; }
.attribution a { color: #0078a8; margin: -2px 7px 0 0; }
.attribution span { margin-top: -2px; }

.actions { display: grid; grid-template-columns: 474px 472px; gap: 20px; }
.actions button { height: 84px; padding: 0 0 2px; border: 0; border-radius: 12px; background: #007bff; color: #fff; font: 32px "Liberation Sans", Arial, sans-serif; }
</style>
